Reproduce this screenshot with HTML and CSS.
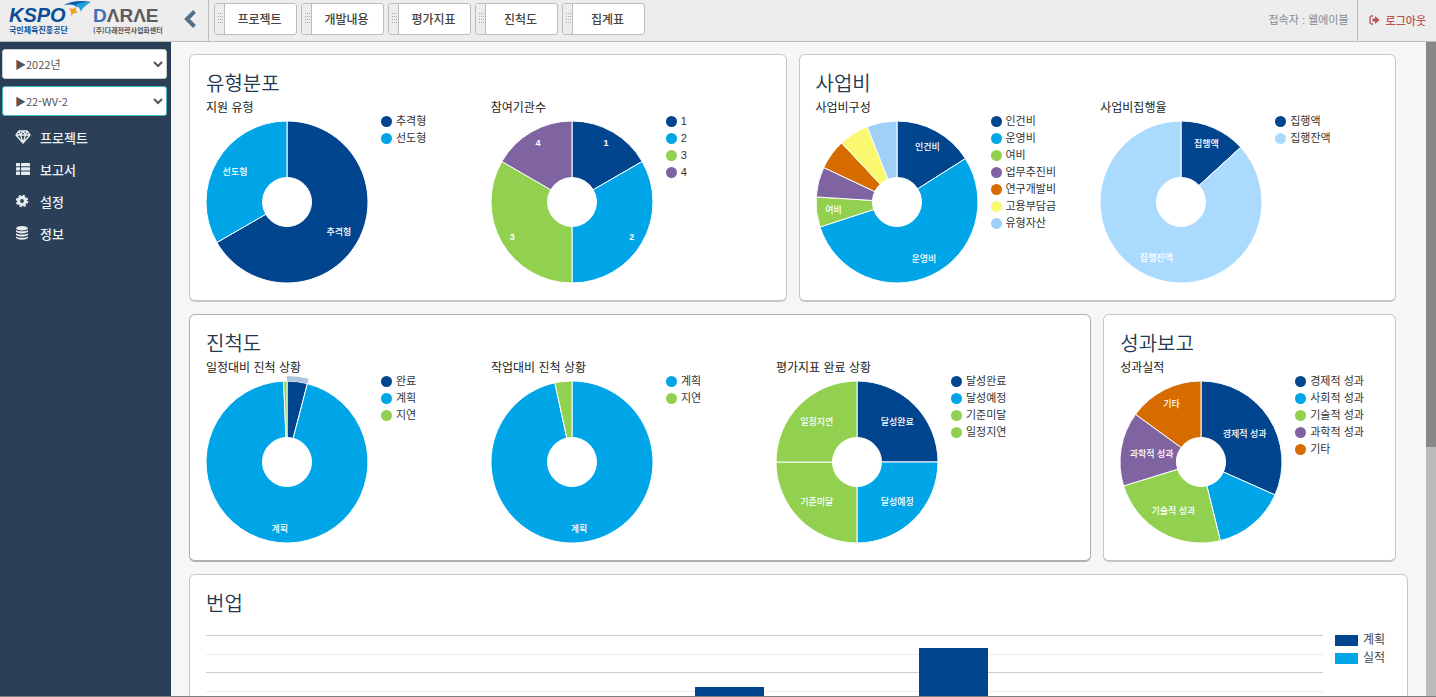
FILE: index.html
```html
<!DOCTYPE html>
<html lang="ko">
<head>
<meta charset="utf-8">
<title>KSPO 대시보드</title>
<link rel="stylesheet" href="styles.css">
</head>
<body>
<header class="topbar">
  <div class="logos">
    <div class="logo kspo">
      <span class="kspo-name">KSPO</span>
      <span class="kspo-sub">국민체육진흥공단</span>
      <svg class="swoosh" viewBox="0 0 27 15" aria-hidden="true">
        <path d="M0 4C7 0 17-1 27 1 20 1 16 3 13 6 10 3 5 3 0 4z" fill="#0b5aa8"/>
        <path d="M11 4C16 1 21 1 27 1 22 4 18 7 17 11 16 7 14 5 11 4z" fill="#1ea0dc"/>
        <path d="M5 7l4 1 3-2 0 4 2 2-4 0-3 3 0-4z" fill="#f5a01e"/>
      </svg>
    </div>
    <div class="logo darae">
      <span class="darae-name"><b>D</b>ΛRΛE</span>
      <span class="darae-sub">(주)다래전략사업화센터</span>
    </div>
  </div>
  <button class="collapse" aria-label="메뉴 접기">
    <svg viewBox="0 0 12 18" width="12" height="18"><path d="M10.500 1.500L3 9l7.500 7.500" fill="none" stroke="#526f8b" stroke-width="4"/></svg>
  </button>
  <nav class="tabs">
    <button class="tab"><span class="grip"></span><span class="tab-label">프로젝트</span></button>
    <button class="tab"><span class="grip"></span><span class="tab-label">개발내용</span></button>
    <button class="tab"><span class="grip"></span><span class="tab-label">평가지표</span></button>
    <button class="tab"><span class="grip"></span><span class="tab-label">진척도</span></button>
    <button class="tab"><span class="grip"></span><span class="tab-label">집계표</span></button>
  </nav>
  <span class="user">접속자 : 웰에이블</span>
  <a class="logout" href="#">
    <svg viewBox="0 0 11 10" width="11" height="10"><path d="M4 1H2.500Q1 1 1 2.500v5Q1 9 2.500 9H4" fill="none" stroke="#c0504d" stroke-width="1.300"/><path d="M3.500 3.500H6V1l4.500 4L6 9V6.500H3.500z" fill="#c0504d"/></svg>
    로그아웃
  </a>
</header>

<div class="body">
  <aside class="sidebar">
    <select class="pick" aria-label="연도"><option>▶2022년</option></select>
    <select class="pick pick-active" aria-label="과제"><option>▶22-WV-2</option></select>
    <nav class="menu">
      <a href="#"><svg viewBox="0 0 16 14" width="16" height="14"><path d="M4 1h8l3 4-7 8-7-8zM1 5h14M4 1l1.500 4L8 13l2.500-8L12 1M5.500 5L8 1l2.500 4" fill="none" stroke="#e8edf2" stroke-width="1.300" stroke-linejoin="round"/></svg>프로젝트</a>
      <a href="#"><svg viewBox="0 0 16 14" width="16" height="14" fill="#e8edf2"><rect x="1" y="1" width="4" height="3.300" rx=".6"/><rect x="6" y="1" width="9" height="3.300" rx=".6"/><rect x="1" y="5.300" width="4" height="3.300" rx=".6"/><rect x="6" y="5.300" width="9" height="3.300" rx=".6"/><rect x="1" y="9.600" width="4" height="3.300" rx=".6"/><rect x="6" y="9.600" width="9" height="3.300" rx=".6"/></svg>보고서</a>
      <a href="#"><svg viewBox="0 0 16 14" width="16" height="14"><circle cx="7" cy="7" r="3.400" fill="none" stroke="#e8edf2" stroke-width="3"/><circle cx="7" cy="7" r="5.300" fill="none" stroke="#e8edf2" stroke-width="1.800" stroke-dasharray="2.400 1.760"/></svg>설정</a>
      <a href="#"><svg viewBox="0 0 16 14" width="16" height="14" fill="#e8edf2"><ellipse cx="7" cy="2.300" rx="6" ry="2.200"/><path d="M1 3.800c1 2 11 2 12 0v1.800c-1 2.400-11 2.400-12 0zM1 7c1 2 11 2 12 0v1.800c-1 2.400-11 2.400-12 0zM1 10.200c1 2 11 2 12 0v1.600c-1 2.600-11 2.600-12 0z"/></svg>정보</a>
    </nav>
  </aside>

  <main class="content">
    <div class="cards">
      <section class="card span2">
        <h2>유형분포</h2>
        <div class="charts">
          <figure data-pie="type"><figcaption>지원 유형</figcaption></figure>
          <figure data-pie="orgs"><figcaption>참여기관수</figcaption></figure>
        </div>
      </section>
      <section class="card span2">
        <h2>사업비</h2>
        <div class="charts">
          <figure data-pie="cost"><figcaption>사업비구성</figcaption></figure>
          <figure data-pie="spent"><figcaption>사업비집행율</figcaption></figure>
        </div>
      </section>
      <section class="card span3 raised">
        <h2>진척도</h2>
        <div class="charts">
          <figure data-pie="schedule"><figcaption>일정대비 진척 상황</figcaption></figure>
          <figure data-pie="work"><figcaption>작업대비 진척 상황</figcaption></figure>
          <figure data-pie="index"><figcaption>평가지표 완료 상황</figcaption></figure>
        </div>
      </section>
      <section class="card">
        <h2>성과보고</h2>
        <div class="charts">
          <figure data-pie="result"><figcaption>성과실적</figcaption></figure>
        </div>
      </section>
    </div>
    <section class="card burnup">
      <h2>번업</h2>
      <div class="burnup-row">
        <div class="plot">
          <div class="group"></div>
          <div class="group"></div>
          <div class="group"><div class="bar" style="height:72%"></div></div>
          <div class="group"><div class="bar" style="height:93%"></div></div>
          <div class="group"></div>
        </div>
        <ul class="bar-legend">
          <li><i class="navy"></i>계획</li>
          <li><i class="sky"></i>실적</li>
        </ul>
      </div>
    </section>
  </main>
  <div class="scroll"><div class="thumb"></div></div>
</div>
<script src="charts.js"></script>
</body>
</html>
```
FILE: styles.css
```css
* { box-sizing: border-box; }
body {
  margin: 0;
  height: 100vh;
  display: flex;
  flex-direction: column;
  overflow: hidden;
  background: #f6f6f6;
  border-bottom: 1px solid #7d7d7d;
  color: #333;
  font-family: "Liberation Sans", "Noto Sans CJK KR", sans-serif;
  font-size: 12px;
}
button, select { font: inherit; color: inherit; }
h2, figure, ul { margin: 0; padding: 0; }
li { list-style: none; }
a { text-decoration: none; color: inherit; }

.topbar {
  flex: none;
  display: flex;
  height: 42px;
  background: #ededed;
  border-bottom: 1px solid #bdbdbd;
}
.logos { width: 171px; display: flex; gap: 24px; padding: 6px 0 0 9px; }
.logo { position: relative; display: flex; flex-direction: column; white-space: nowrap; }
.kspo { width: 60px; }
.kspo-name { font: italic bold 20px/18px "Liberation Sans", sans-serif; color: #0b4d96; }
.kspo-sub { font: bold 8px/12px "Noto Sans CJK KR", sans-serif; color: #0b4d96; }
.swoosh { position: absolute; left: 55px; top: -5px; width: 27px; height: 15px; }
.darae-name { font: bold 19px/20px "Liberation Sans", sans-serif; color: #5c5c5e; }
.darae-name b { color: #3f70b7; }
.darae-sub { font: bold 7px/8px "Noto Sans CJK KR", sans-serif; color: #555; }
.collapse {
  width: 38px;
  padding: 0 0 3px;
  border: 0;
  border-right: 1px solid #bdbdbd;
  background: none;
  display: flex;
  align-items: center;
  justify-content: center;
}
.tabs { display: flex; gap: 4px; padding: 3px 0 6px 5px; flex: 1; }
.tab {
  display: flex;
  width: 83px;
  height: 32px;
  padding: 0;
  border: 1px solid #bcbcbc;
  border-radius: 3px;
  background: #fff;
  color: #444;
  overflow: hidden;
}
.grip {
  width: 10px;
  height: 30px;
  border-right: 1px solid #bcbcbc;
  background: #ededed;
  display: flex;
  align-items: center;
  justify-content: center;
}
.grip::before {
  content: "";
  width: 6px;
  height: 12px;
  background: conic-gradient(#aaa 25%, transparent 0) 0 0 / 2px 3px;
}
.tab-label { flex: 1; padding-right: 2px; line-height: 32px; font-size: 12px; font-weight: 500; }
.user { padding: 0 8px; line-height: 41px; font-size: 11px; color: #818b9b; }
.logout {
  display: flex;
  align-items: center;
  gap: 6px;
  padding: 0 10px 2px 11px;
  border-left: 1px solid #bdbdbd;
  color: #c0504d;
  font-size: 11px;
  font-weight: 500;
}

.body { flex: 1; min-height: 0; display: flex; }
.sidebar {
  flex: none;
  width: 171px;
  padding: 7px 4px 7px 2px;
  background: #2b4056;
}
.pick {
  display: block;
  width: 100%;
  height: 30px;
  margin-bottom: 7px;
  padding: 0 0 0 8px;
  border: 1px solid #ccc;
  border-radius: 3px;
  background: #fff;
  color: #555;
  font-family: "Noto Sans CJK KR", sans-serif;
  font-size: 11px;
}
.pick-active { margin-bottom: 5px; border-color: #46b8c4; }
.menu a {
  display: flex;
  align-items: center;
  gap: 9px;
  height: 32px;
  padding-left: 13px;
  color: #edf1f5;
  font-size: 13px;
  font-weight: 500;
}

.content { flex: 1; min-width: 0; overflow: hidden; padding: 12px 18px; }
.cards {
  display: grid;
  grid-template-columns: repeat(4, 1fr);
  gap: 12px;
  margin-right: 12px;
}
.card {
  min-width: 0;
  padding: 14px 10px 17px 16px;
  border: 1px solid #c6c6c6;
  border-bottom-width: 2px;
  border-radius: 6px;
  background: #fff;
}
.span2 { grid-column: span 2; }
.span3 { grid-column: span 3; }
.raised { border-color: #b0b0b0; }
.card h2 { font-size: 20px; line-height: 30px; font-weight: 350; color: #22384e; }
.charts { display: flex; }
figure {
  flex: 0 1 285px;
  display: grid;
  grid-template-columns: 162px 1fr;
  grid-template-rows: 18px 162px;
  column-gap: 13px;
  row-gap: 4px;
}
figcaption { font-size: 12px; line-height: 18px; white-space: nowrap; color: #222; }
.pie { grid-row: 2; width: 162px; height: 162px; overflow: visible; }
.pie text { fill: #fff; font-size: 9px; font-weight: 500; text-anchor: middle; }
.pie .digit { font-weight: bold; }
.legend { grid-column: 2; grid-row: 1 / 3; padding-top: 14px; }
.legend li {
  display: flex;
  align-items: center;
  gap: 4px;
  line-height: 17px;
  font-size: 11px;
  white-space: nowrap;
}
.legend i { width: 11px; height: 11px; border-radius: 50%; }

.burnup { margin-top: 12px; padding-right: 22px; }
.burnup-row { display: flex; gap: 12px; padding-top: 12px; }
.plot {
  flex: 1;
  height: 187px;
  margin-top: 4px;
  display: flex;
  align-items: flex-end;
  background:
    linear-gradient(#ccc 1px, transparent 1px) 0 0 / 100% 37px,
    linear-gradient(#ebebeb 1px, transparent 1px) 0 19px / 100% 37px;
}
.group { flex: 1; height: 100%; display: flex; align-items: flex-end; justify-content: center; }
.group::after { content: ""; width: 31%; }
.bar { width: 31%; background: #00458d; }
.bar-legend { color: #444; }
.bar-legend li { display: flex; align-items: center; gap: 5px; height: 18px; line-height: 12px; font-size: 12px; }
.bar-legend i { width: 23px; height: 11px; }
.navy { background: #00458d; }
.sky { background: #00a5e8; }

.scroll { flex: none; width: 10px; background: #bbb; }
.thumb { height: 62%; background: #888; }
```
FILE: charts.js
```js
const NAVY = '#00458d', SKY = '#00a5e8', GREEN = '#92d050', PURPLE = '#8064a2',
      ORANGE = '#d66b00', YELLOW = '#faf870', PALE = '#a0cff7', ICE = '#abdaff';

// Slice: [name, degrees, colour, label radius (0 hides the label)]
const PIES = {
  type: [['추격형', 240, NAVY, 60], ['선도형', 120, SKY, 60]],
  orgs: [['1', 60, NAVY, 68], ['2', 120, SKY, 69], ['3', 120, GREEN, 69], ['4', 60, PURPLE, 68]],
  cost: [['인건비', 57.6, NAVY, 63], ['운영비', 194.4, SKY, 63], ['여비', 21.6, GREEN, 64],
         ['업무추진비', 21.6, PURPLE, 0], ['연구개발비', 21.6, ORANGE, 0],
         ['고용부담금', 21.6, YELLOW, 0], ['유형자산', 21.6, PALE, 0]],
  spent: [['집행액', 47.5, NAVY, 63], ['집행잔액', 312.5, ICE, 61]],
  schedule: [['완료', 14.6, NAVY, 0], ['계획', 343, SKY, 67], ['지연', 2.4, GREEN, 0]],
  work: [['계획', 347.8, SKY, 67], ['지연', 12.2, GREEN, 0]],
  index: [['달성완료', 90, NAVY, 57], ['달성예정', 90, SKY, 57], ['기준미달', 90, GREEN, 57], ['일정지연', 90, GREEN, 57]],
  result: [['경제적 성과', 114, NAVY, 52], ['사회적 성과', 52.2, SKY, 0], ['기술적 성과', 86.6, GREEN, 56],
           ['과학적 성과', 53.3, PURPLE, 50], ['기타', 53.9, ORANGE, 65]]
};

const C = 81;
const at = (r, deg) => {
  const a = deg * Math.PI / 180;
  return (C + r * Math.sin(a)).toFixed(2) + ' ' + (C - r * Math.cos(a)).toFixed(2);
};
const ring = (from, to, inner, outer) => {
  const big = to - from > 180 ? 1 : 0;
  return `M${at(outer, from)}A${outer} ${outer} 0 ${big} 1 ${at(outer, to)}` +
         `L${at(inner, to)}A${inner} ${inner} 0 ${big} 0 ${at(inner, from)}z`;
};

document.querySelectorAll('[data-pie]').forEach(fig => {
  const slices = PIES[fig.dataset.pie];
  let angle = 0, paths = '', labels = '';
  slices.forEach(([name, deg, color, r]) => {
    paths += `<path d="${ring(angle, angle + deg, 24.5, 81)}" fill="${color}" stroke="#fff" stroke-width="1"/>`;
    if (r) {
      const [x, y] = at(r, angle + deg / 2).split(' ');
      const cls = /^\d+$/.test(name) ? ' class="digit"' : '';
      labels += `<text x="${x}" y="${y}" dy="3"${cls}>${name}</text>`;
    }
    angle += deg;
  });
  if (fig.dataset.pie === 'schedule') {
    paths += `<path d="${ring(0, 14.6, 81, 86)}" fill="#b0c4de"/>`;
  }
  fig.insertAdjacentHTML('beforeend',
    `<svg class="pie" viewBox="0 0 162 162">${paths}${labels}</svg>` +
    `<ul class="legend">${slices.map(s => `<li><i style="background:${s[2]}"></i>${s[0]}</li>`).join('')}</ul>`);
});
```
